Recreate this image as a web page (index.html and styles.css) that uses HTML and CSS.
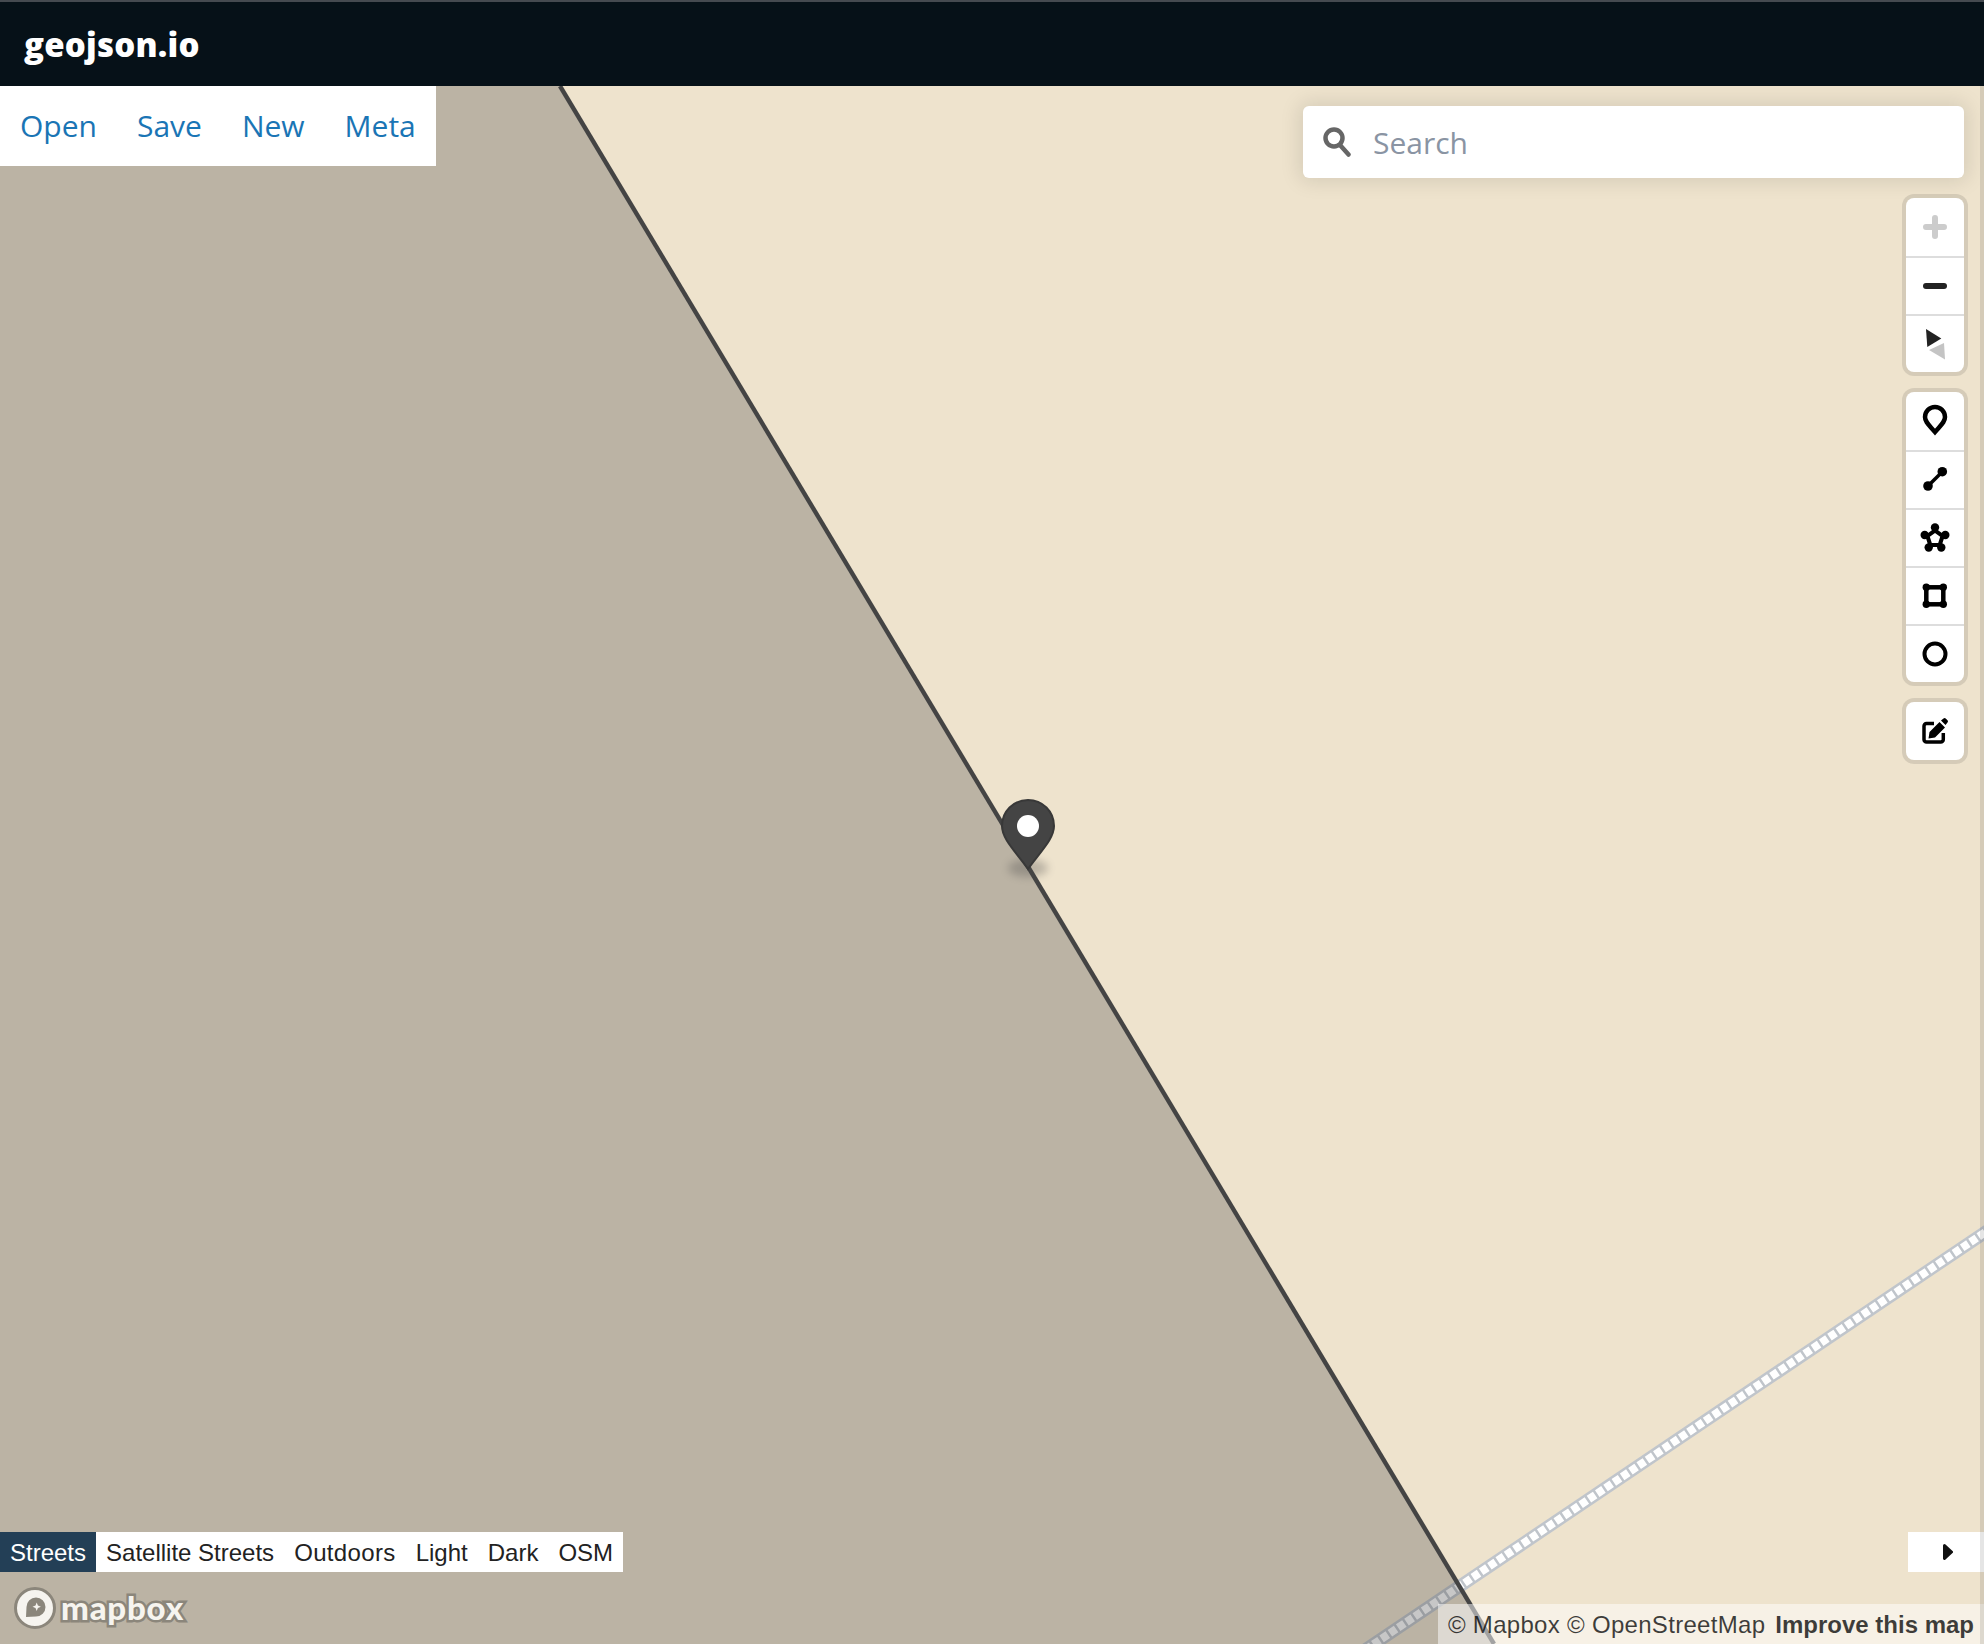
FILE: index.html
```html
<!DOCTYPE html>
<html lang="en">
<head>
<meta charset="utf-8">
<title>geojson.io</title>
<link rel="stylesheet" href="styles.css">
</head>
<body>
<header class="topbar"><span class="logo">geojson.io</span></header>
<main class="map">
  <svg class="canvas" viewBox="0 0 1984 1558" aria-hidden="true">
    <line class="road-case" x1="1365" y1="1564" x2="1990" y2="1143"/>
    <line class="road-dash" x1="1365" y1="1564" x2="1990" y2="1143"/>
    <polygon class="poly-fill" points="560,0 1494,1558 0,1558 0,0"/>
    <line class="poly-line" x1="560" y1="0" x2="1494" y2="1558"/>
    <ellipse class="pin-shadow" cx="1028" cy="782" rx="20" ry="9"/>
    <path class="pin-body" d="M1028 714c-14.500 0-26 11.500-26 26 0 13 14 26 26 43 12-17 26-30 26-43 0-14.500-11.500-26-26-26z"/>
    <circle class="pin-dot" cx="1028" cy="740" r="11"/>
  </svg>

  <nav class="menu">
    <a class="menu-link">Open</a>
    <a class="menu-link">Save</a>
    <a class="menu-link">New</a>
    <a class="menu-link">Meta</a>
  </nav>

  <div class="search">
    <svg class="search-icon" viewBox="0 0 28 30" aria-hidden="true">
      <circle cx="11" cy="11" r="8.500"/>
      <line x1="17" y1="18" x2="25.500" y2="27.500"/>
    </svg>
    <span class="search-text">Search</span>
  </div>

  <div class="controls">
    <div class="group">
      <div class="tool">
        <svg class="icon" viewBox="0 0 32 32"><path class="stroke-thick muted" d="M16 7v18M7 16h18"/></svg>
      </div>
      <div class="tool">
        <svg class="icon" viewBox="0 0 32 32"><path class="stroke-thick dark" d="M7 16h18"/></svg>
      </div>
      <div class="tool">
        <svg class="icon" viewBox="0 0 32 32">
          <polygon class="fill-dark" points="7,1 22.300,10.500 8.300,19"/>
          <polygon class="fill-muted" points="10,22 25,15 26,31.500"/>
        </svg>
      </div>
    </div>
    <div class="group">
      <div class="tool">
        <svg class="icon" viewBox="0 0 32 32"><path class="stroke-icon" d="M16 27C10 20 6 17 6 12a10 10 0 0 1 20 0c0 5-4 8-10 15z"/></svg>
      </div>
      <div class="tool">
        <svg class="icon" viewBox="0 0 32 32">
          <path class="stroke-thin" d="M9 22L23.300 7.700"/>
          <circle class="fill-black" cx="9" cy="22" r="4.800"/>
          <circle class="fill-black" cx="23.300" cy="7.700" r="4.800"/>
        </svg>
      </div>
      <div class="tool">
        <svg class="icon" viewBox="0 0 32 32">
          <path class="fill-black-odd" d="M16 6L26 13.300 22.200 25H9.800L6 13.300zM16 11L10.800 14.800 12.800 20.900H19.200L21.200 14.800z"/>
          <circle class="fill-black" cx="16" cy="5.500" r="4.200"/>
          <circle class="fill-black" cx="26.300" cy="13" r="4.200"/>
          <circle class="fill-black" cx="22.300" cy="25.500" r="4.200"/>
          <circle class="fill-black" cx="9.700" cy="25.500" r="4.200"/>
          <circle class="fill-black" cx="5.700" cy="13" r="4.200"/>
        </svg>
      </div>
      <div class="tool">
        <svg class="icon" viewBox="0 0 32 32">
          <rect class="stroke-rect" x="7.300" y="7.300" width="17" height="17"/>
          <circle class="fill-black" cx="7.300" cy="7.300" r="3.700"/>
          <circle class="fill-black" cx="24.300" cy="7.300" r="3.700"/>
          <circle class="fill-black" cx="7.300" cy="24.300" r="3.700"/>
          <circle class="fill-black" cx="24.300" cy="24.300" r="3.700"/>
        </svg>
      </div>
      <div class="tool">
        <svg class="icon" viewBox="0 0 32 32"><circle class="stroke-circle" cx="16" cy="16" r="10.500"/></svg>
      </div>
    </div>
    <div class="group">
      <div class="tool">
        <svg class="icon" viewBox="0 0 32 32">
          <path class="stroke-edit" d="M24.300 18v6.500a2.500 2.500 0 0 1-2.500 2.500H7.500a2.500 2.500 0 0 1-2.500-2.500V11a2.500 2.500 0 0 1 2.500-2.500H15"/>
          <path class="fill-black" d="M10.500 17L20.500 7l5.500 5.500-10 10-6.500 1zM22 5.500l2.500-2a1.600 1.600 0 0 1 2.200 0l1.800 1.800a1.600 1.600 0 0 1 0 2.200L26.500 10z"/>
        </svg>
      </div>
    </div>
  </div>

  <div class="layers">
    <span class="layer active">Streets</span>
    <span class="layer">Satellite Streets</span>
    <span class="layer layer-wide">Outdoors</span>
    <span class="layer">Light</span>
    <span class="layer">Dark</span>
    <span class="layer">OSM</span>
  </div>

  <div class="brand">
    <svg class="brand-icon" viewBox="0 0 42 44" aria-hidden="true">
      <circle class="brand-ring" cx="21" cy="22" r="19.500"/>
      <path class="brand-drop" d="M12 31L12.500 21A9.500 9.500 0 1 1 22 30.500z"/>
      <path class="brand-star" d="M22.700 16.500l1.200 3 3 1.200-3 1.200-1.200 3-1.200-3-3-1.200 3-1.200z"/>
    </svg>
    <span class="brand-text">mapbox</span>
  </div>

  <div class="toggle">
    <svg class="toggle-icon" viewBox="0 0 10 16" aria-hidden="true"><polygon points="1.500,1.500 8.500,8 1.500,14.500"/></svg>
  </div>

  <div class="attribution">
    <span class="attribution-text">© Mapbox © OpenStreetMap</span>
    <strong>Improve this map</strong>
  </div>

  <div class="edge"></div>
</main>
</body>
</html>
```

FILE: styles.css
```css
html, body {
  margin: 0;
  padding: 0;
  height: 1644px;
  overflow: hidden;
}

body {
  display: flex;
  flex-direction: column;
  font-family: "Open Sans", sans-serif;
  background: #eee3cd;
}

.topbar {
  height: 84px;
  flex: none;
  display: flex;
  align-items: center;
  padding-left: 24px;
  background: #061118;
  border-top: 2px solid #454a50;
}

.logo {
  color: #fff;
  font-size: 33px;
  font-weight: 800;
  letter-spacing: 0.2px;
}

.map {
  position: relative;
  flex: 1;
  overflow: hidden;
  background: #eee3cd;
}

.canvas {
  position: absolute;
  inset: 0;
  width: 1984px;
  height: 1558px;
}

.road-case {
  stroke: #c0c5cb;
  stroke-width: 13;
}

.road-dash {
  stroke: #fff;
  stroke-width: 8;
  stroke-dasharray: 7.500 2.500;
}

.poly-fill {
  fill: #444;
  opacity: 0.3;
}

.poly-line {
  stroke: #444;
  stroke-width: 4.400;
}

.pin-shadow {
  fill: #444;
  opacity: 0.3;
  filter: blur(4px);
}

.pin-body {
  fill: #444;
  stroke: #383838;
  stroke-width: 2;
}

.pin-dot {
  fill: #fff;
}

.menu {
  position: absolute;
  top: 0;
  left: 0;
  display: flex;
  height: 80px;
  background: #fff;
}

.menu-link {
  padding: 0 20px;
  color: #1a75b5;
  font-size: 30px;
  line-height: 80px;
}

.search {
  position: absolute;
  top: 20px;
  right: 20px;
  width: 661px;
  height: 72px;
  display: flex;
  align-items: center;
  gap: 22px;
  padding-left: 20px;
  box-sizing: border-box;
  background: #fff;
  border-radius: 6px;
  box-shadow: 0 0 20px 4px rgba(0, 0, 0, 0.1);
}

.search-icon {
  width: 28px;
  height: 30px;
  fill: none;
  stroke: #666;
  stroke-width: 4.500;
  stroke-linecap: round;
}

.search-text {
  color: #8a94a3;
  font-size: 30px;
}

.controls {
  position: absolute;
  top: 112px;
  right: 20px;
  display: flex;
  flex-direction: column;
  gap: 20px;
}

.group {
  width: 58px;
  background: #fff;
  border-radius: 8px;
  overflow: hidden;
  box-shadow: 0 0 0 4px rgba(0, 0, 0, 0.1);
}

.tool {
  height: 58px;
  box-sizing: border-box;
  display: flex;
  align-items: center;
  justify-content: center;
  border-top: 2px solid #ddd;
}

.tool:first-child {
  border-top: 0;
}

.icon {
  width: 32px;
  height: 32px;
  overflow: visible;
}

.stroke-thick {
  fill: none;
  stroke-width: 6;
  stroke-linecap: round;
}

.muted {
  stroke: #ccc;
}

.dark {
  stroke: #222;
}

.fill-dark {
  fill: #222;
}

.fill-muted {
  fill: #c4c4c4;
}

.fill-black {
  fill: #000;
}

.fill-black-odd {
  fill: #000;
  fill-rule: evenodd;
}

.stroke-icon {
  fill: none;
  stroke: #000;
  stroke-width: 4.500;
}

.stroke-circle {
  fill: none;
  stroke: #000;
  stroke-width: 4;
}

.stroke-thin {
  fill: none;
  stroke: #000;
  stroke-width: 3.500;
}

.stroke-rect {
  fill: none;
  stroke: #000;
  stroke-width: 4.500;
}

.stroke-edit {
  fill: none;
  stroke: #000;
  stroke-width: 3.500;
}

.layers {
  position: absolute;
  left: 0;
  bottom: 72px;
  display: flex;
  height: 40px;
  background: #fff;
  font-family: "Liberation Sans", Arial, sans-serif;
  font-size: 24px;
  line-height: 42px;
}

.layer {
  padding: 0 10px;
  color: #222;
}

.layer-wide {
  letter-spacing: 0.35px;
}

.active {
  color: #fff;
  background: #233f56;
}

.brand {
  position: absolute;
  left: 14px;
  bottom: 14px;
  display: flex;
  align-items: center;
  gap: 5px;
}

.brand-icon {
  width: 42px;
  height: 44px;
}

.brand-ring {
  fill: #f6f4ef;
  stroke: #8b867b;
  stroke-width: 3;
}

.brand-drop {
  fill: #8b867b;
}

.brand-star {
  fill: #f6f4ef;
}

.brand-text {
  color: #f6f4ef;
  font-family: Lato, sans-serif;
  font-size: 33px;
  font-weight: 900;
  line-height: 40px;
  letter-spacing: 0.8px;
  margin-top: -3px;
  -webkit-text-stroke: 5px #8b867b;
  paint-order: stroke fill;
}

.toggle {
  position: absolute;
  right: 0;
  bottom: 72px;
  width: 76px;
  height: 40px;
  box-sizing: border-box;
  padding-left: 3px;
  display: flex;
  align-items: center;
  justify-content: center;
  background: #fff;
}

.toggle-icon {
  width: 10px;
  height: 16px;
  fill: #111;
  stroke: #111;
  stroke-width: 3;
  stroke-linejoin: round;
}

.attribution {
  position: absolute;
  right: 0;
  bottom: 0;
  height: 40px;
  display: flex;
  gap: 10px;
  padding: 0 10px;
  background: rgba(255, 255, 255, 0.5);
  color: rgba(0, 0, 0, 0.75);
  font-family: "Liberation Sans", Arial, sans-serif;
  font-size: 24px;
  line-height: 42px;
}

.attribution-text {
  letter-spacing: 0.3px;
}

.edge {
  position: absolute;
  top: 0;
  right: 0;
  bottom: 0;
  width: 4px;
  background: rgba(0, 0, 0, 0.1);
}
```
